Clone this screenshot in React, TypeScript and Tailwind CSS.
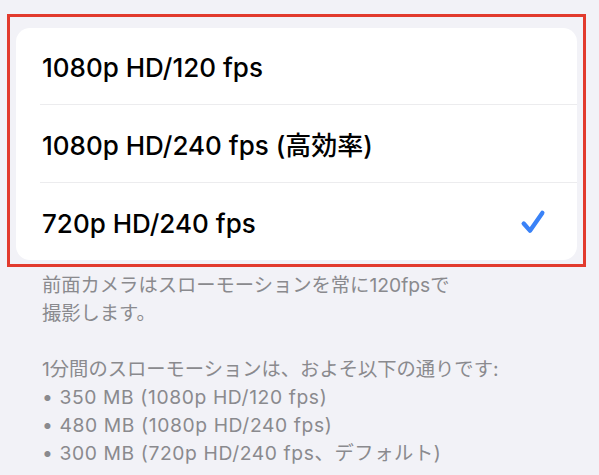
import { useState } from "react";

const options = [
  "1080p HD/120 fps",
  "1080p HD/240 fps (高効率)",
  "720p HD/240 fps",
];

const sizes = [
  "• 350 MB (1080p HD/120 fps)",
  "• 480 MB (1080p HD/240 fps)",
  "• 300 MB (720p HD/240 fps、デフォルト)",
];

function CheckIcon() {
  return (
    <svg width="26" height="26" viewBox="0 0 24 24" fill="none">
      <path
        d="M3.4 13.4 L9.2 20 L20.6 3.6"
        stroke="#3a82f7"
        strokeWidth="4"
        strokeLinecap="round"
        strokeLinejoin="round"
      />
    </svg>
  );
}

export default function App() {
  const [selected, setSelected] = useState(2);

  return (
    <div
      className="min-h-[475px] w-[599px] bg-[#f2f2f7] pt-[14px]"
      style={{ fontFamily: '"Inter", "Noto Sans CJK JP", sans-serif' }}
    >
      {/* annotation frame */}
      <div className="ml-[7px] w-[579px] border-[3px] border-[#e23b2e] px-[6px] pt-[11px] pb-[4px]">
        <div className="rounded-[14px] bg-white">
          {options.map((label, i) => (
            <button
              key={label}
              onClick={() => setSelected(i)}
              className="flex w-full items-stretch pl-[24px] text-left"
            >
              <div
                className={`flex flex-1 items-center justify-between pr-[31px] ${
                  i < options.length - 1 ? "border-b border-[#ececee]" : ""
                } ${i === 1 ? "h-[78px]" : "h-[77px]"}`}
              >
                <span className="pl-[2px] pt-[3px] text-[26px] font-medium text-black">
                  {label}
                </span>
                {selected === i ? <CheckIcon /> : null}
              </div>
            </button>
          ))}
        </div>
      </div>

      <div className="px-[42px] pt-[4px] text-[19.3px] leading-[28px] text-[#8a8a8e]">
        <p>前面カメラはスローモーションを常に120fpsで</p>
        <p>撮影します。</p>
        <p className="mt-[28px]">1分間のスローモーションは、およそ以下の通りです:</p>
        {sizes.map((s) => (
          <p key={s} className="tracking-[0.6px]">
            {s}
          </p>
        ))}
      </div>
    </div>
  );
}
